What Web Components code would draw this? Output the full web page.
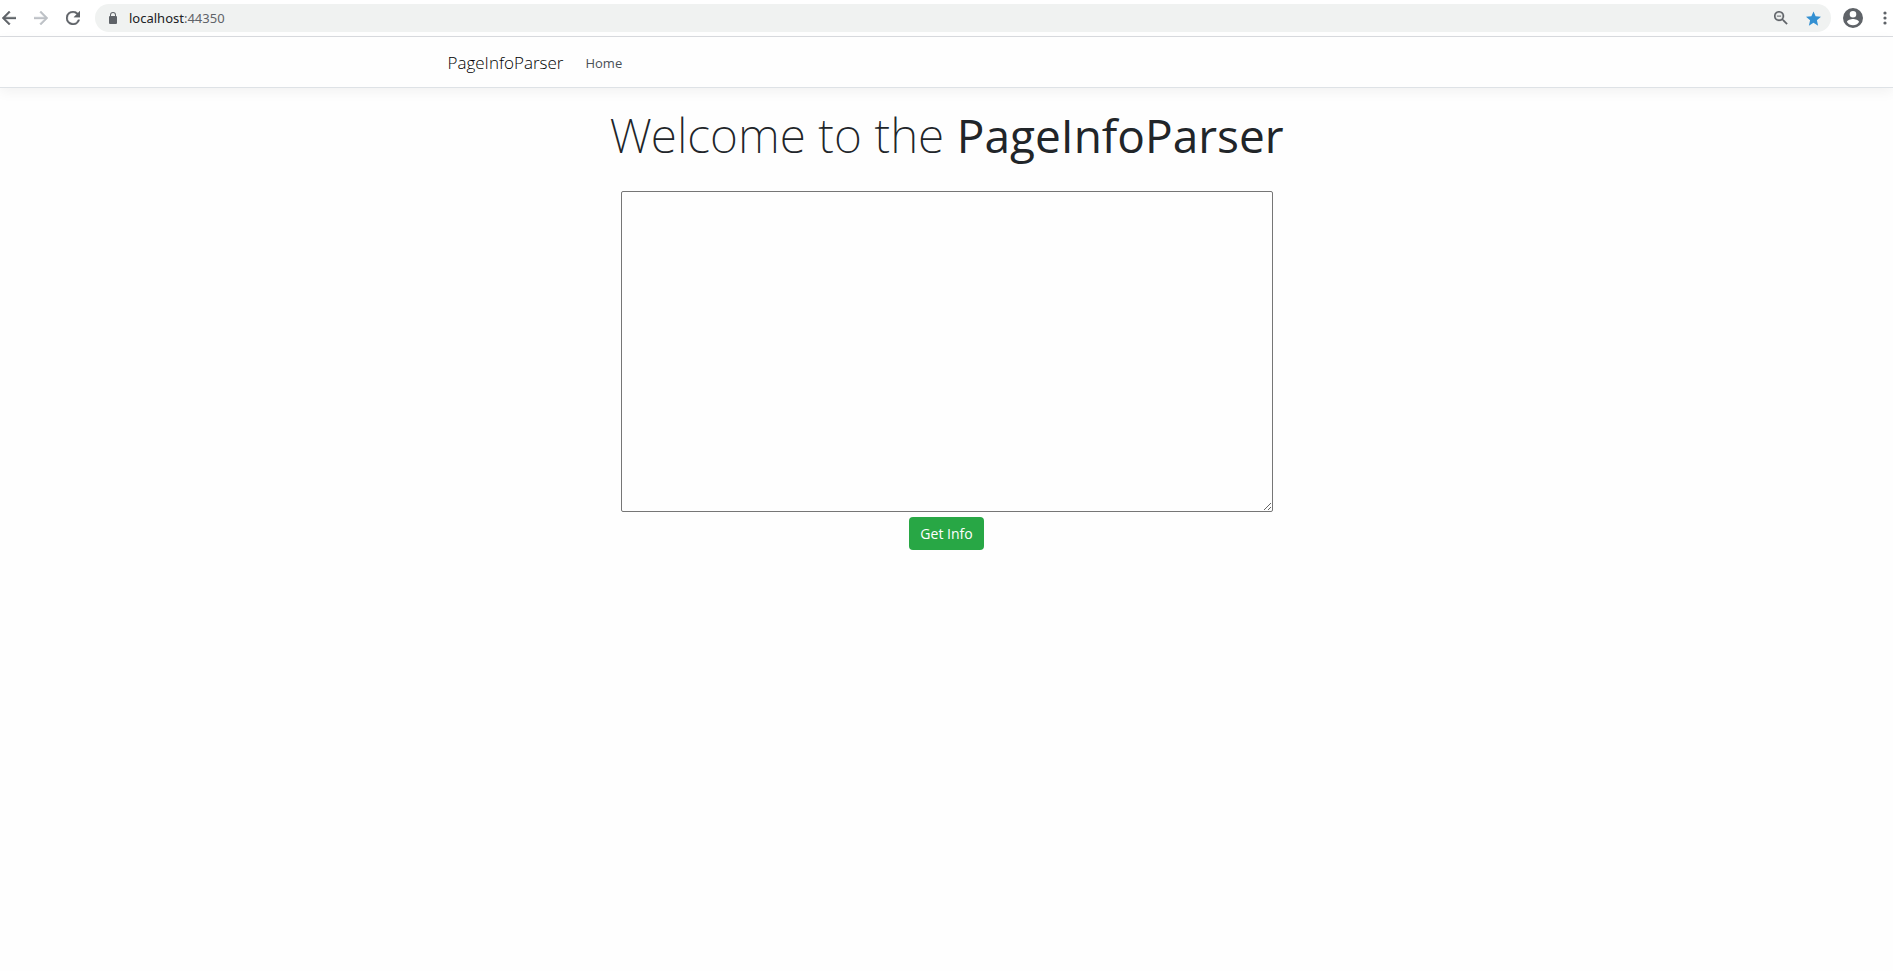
<!DOCTYPE html>
<html lang="en">
<head>
<meta charset="utf-8">
<meta name="viewport" content="width=device-width, initial-scale=1">
<title>PageInfoParser</title>
<style>
html, body { margin: 0; }
body { background: #fefefe; color: #212529; font-family: "Open Sans", "Noto Sans", sans-serif; font-size: 14px; }
</style>
</head>
<body>
<browser-toolbar><span slot="host">localhost</span><span slot="port">:44350</span></browser-toolbar>
<site-header><span slot="brand">PageInfoParser</span><span slot="link">Home</span></site-header>
<info-form></info-form>
<script>
const define = (name, html) => {
  const template = document.createElement('template');
  template.innerHTML = html;
  customElements.define(name, class extends HTMLElement {
    constructor() {
      super();
      this.attachShadow({ mode: 'open' }).append(template.content.cloneNode(true));
    }
  });
};

define('browser-toolbar', `
<style>
:host { display: flex; align-items: center; height: 36px; padding: 0 0 0 2px; border-bottom: 1px solid #dadce0; background: #fff; color: #5f6368; }
button { display: flex; flex: none; align-items: center; justify-content: center; width: 14px; height: 28px; margin: 0 18px 0 0; padding: 0; border: 0; background: none; color: inherit; }
button:disabled { color: #bdc1c6; }
svg { display: block; flex: none; fill: currentColor; }
.pill { display: flex; flex: 1; align-items: center; box-sizing: border-box; height: 28px; margin: 0 12px 0 -3px; padding: 0 11px 0 14px; border-radius: 14px; background: #f0f2f1; }
.pill button { margin: 0; }
.pill button + button { margin-left: 18px; }
.url { flex: 1; margin-left: 12px; font: 13px/20px "Noto Sans", sans-serif; white-space: nowrap; }
.host { color: #202124; }
.star { color: #3390d2; }
.profile { width: 20px; margin-right: 18px; }
.menu { width: 8px; margin-right: 4px; }
</style>
<button aria-label="Back"><svg width="14" height="14" viewBox="4 4 16 16"><path d="M20 11H7.83l5.59-5.59L12 4l-8 8 8 8 1.41-1.41L7.83 13H20z" stroke="currentColor" stroke-width=".5"/></svg></button>
<button aria-label="Forward" disabled><svg width="14" height="14" viewBox="4 4 16 16"><path d="M12 4l-1.41 1.41L16.17 11H4v2h12.17l-5.58 5.59L12 20l8-8z" stroke="currentColor" stroke-width=".5"/></svg></button>
<button aria-label="Reload"><svg width="14" height="14" viewBox="4 4 16 16"><path d="M17.65 6.35A7.96 7.96 0 0 0 12 4a8 8 0 1 0 7.73 10h-2.08A6 6 0 1 1 12 6c1.66 0 3.14.69 4.22 1.78L13 11h7V4z" stroke="currentColor" stroke-width=".4"/></svg></button>
<div class="pill">
  <svg width="8" height="12" viewBox="0 0 8 12"><path fill-rule="evenodd" d="M1 4V3a3 3 0 0 1 6 0v1q1 0 1 1v6q0 1-1 1H1q-1 0-1-1V5q0-1 1-1zm1 0h4V3a2 2 0 0 0-4 0z"/></svg>
  <span class="url"><span class="host"><slot name="host"></slot></span><slot name="port"></slot></span>
  <button aria-label="Zoom"><svg width="14" height="14" viewBox="3 3 18 18"><path d="M15.5 14h-.79l-.28-.27a6.5 6.5 0 1 0-.7.7l.27.28v.79l5 4.99L20.49 19zm-6 0a4.5 4.5 0 1 1 0-9 4.5 4.5 0 0 1 0 9zM7 9h5v1H7z" stroke="currentColor" stroke-width=".3"/></svg></button>
  <button class="star" aria-label="Bookmark"><svg width="15" height="15" viewBox="2 2 20 19"><path d="M12 17.27 18.18 21l-1.64-7.03L22 9.24l-7.19-.61L12 2 9.19 8.63 2 9.24l5.46 4.73L5.82 21z"/></svg></button>
</div>
<button class="profile" aria-label="Profile"><svg width="20" height="20" viewBox="2 2 20 20"><path d="M12 2a10 10 0 1 0 0 20 10 10 0 0 0 0-20zm0 3a3.3 3.3 0 1 1 0 6.600 3.300 3.300 0 0 1 0-6.600zm0 14.200a7.200 7.200 0 0 1-6-3.220c.03-1.990 4-3.080 6-3.080s5.970 1.090 6 3.080a7.200 7.200 0 0 1-6 3.220z"/></svg></button>
<button class="menu" aria-label="Menu"><svg width="4" height="14" viewBox="0 0 4 14"><circle cx="2" cy="2" r="1.600"/><circle cx="2" cy="7" r="1.600"/><circle cx="2" cy="12" r="1.600"/></svg></button>
`);

define('site-header', `
<style>
:host { display: block; border-bottom: 1px solid #dee2e6; box-shadow: 0 4px 12px rgba(0, 0, 0, .05); }
nav { display: flex; align-items: center; box-sizing: border-box; max-width: 1026px; height: 50px; margin: 0 auto; padding: 2px 14px 0; }
a { color: #495057; text-decoration: none; }
.brand { margin-right: 22px; color: #000; font-size: 17px; font-weight: 350; line-height: 28px; }
.link { font-size: 13px; line-height: 22px; }
</style>
<nav><a class="brand" href="#"><slot name="brand"></slot></a><a class="link" href="#"><slot name="link"></slot></a></nav>
`);

define('info-form', `
<style>
:host { display: block; padding: 16px 14px; text-align: center; }
h1 { height: 63px; margin: 0 0 24px; font-size: 48px; font-weight: 200; line-height: 62px; font-family: "Noto Sans", sans-serif; }
b { font-family: "Open Sans", sans-serif; font-size: 46px; font-weight: 400; }
form { display: flex; flex-direction: column; align-items: center; margin: 0; }
textarea { box-sizing: border-box; width: 652px; max-width: 100%; height: 321px; border: 1px solid #767676; border-radius: 2px; background: #fefefe; font: inherit; }
button { margin-top: 5px; padding: 6px 11px; border: 0; border-radius: 4px; background: #28a745; color: #fff; font: 14px/21px "Open Sans", sans-serif; }
</style>
<h1>Welcome to the <b>PageInfoParser</b></h1>
<form onsubmit="return false"><textarea aria-label="Page addresses"></textarea><button>Get Info</button></form>
`);
</script>
</body>
</html>
